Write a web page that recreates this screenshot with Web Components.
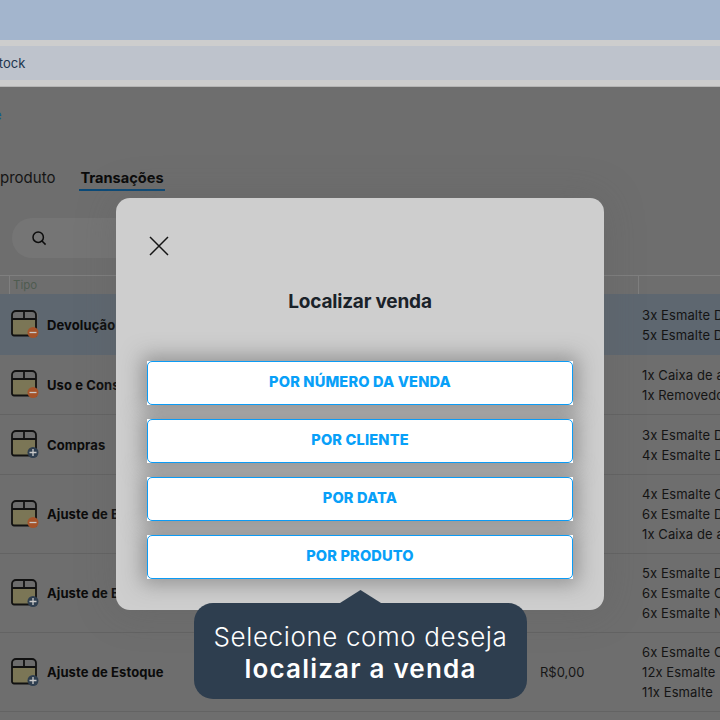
<!DOCTYPE html>
<html lang="pt-BR">
  <head>
    <meta charset="UTF-8" />
    <title>Localizar venda</title>
    <style>
      html, body { margin: 0; padding: 0; }
      body { width: 720px; height: 720px; overflow: hidden; position: relative; background: #6e6e6e; font-family: Inter, "Liberation Sans", sans-serif; }
    </style>
  </head>
  <body>
    <browser-chrome url="stock"></browser-chrome>
    <page-content>
      <tab-bar></tab-bar>
      <search-box></search-box>
      <tx-table>
        <tx-row kind="minus" label="Devolução" selected>
          <div>3x Esmalte D</div><div>5x Esmalte D</div>
        </tx-row>
        <tx-row kind="minus" label="Uso e Consumo">
          <div>1x Caixa de a</div><div>1x Removedo</div>
        </tx-row>
        <tx-row kind="plus" label="Compras">
          <div>3x Esmalte D</div><div>4x Esmalte D</div>
        </tx-row>
        <tx-row kind="minus" label="Ajuste de Estoque" tall>
          <div>4x Esmalte C</div><div>6x Esmalte D</div><div>1x Caixa de a</div>
        </tx-row>
        <tx-row kind="plus" label="Ajuste de Estoque" tall>
          <div>5x Esmalte D</div><div>6x Esmalte C</div><div>6x Esmalte N</div>
        </tx-row>
        <tx-row kind="plus" label="Ajuste de Estoque" value="R$0,00" tall>
          <div>6x Esmalte C</div><div>12x Esmalte</div><div>11x Esmalte</div>
        </tx-row>
      </tx-table>
    </page-content>
    <modal-dialog heading="Localizar venda">
      <choice-button>POR NÚMERO DA VENDA</choice-button>
      <choice-button>POR CLIENTE</choice-button>
      <choice-button>POR DATA</choice-button>
      <choice-button>POR PRODUTO</choice-button>
    </modal-dialog>
    <hint-bubble>
      Selecione como deseja<br /><b>localizar a venda</b>
    </hint-bubble>

    <template id="browser-chrome-template">
      <style>
        :host { display: block; }
        .sky { height: 40px; background: #a3b5cd; }
        .frame { height: 47px; box-sizing: border-box; padding: 6px 0 6px; background: #cdcdcd; border-bottom: 1px solid #b5b5b5; }
        .address { height: 34px; background: #bec3cc; display: flex; align-items: center; overflow: hidden; font-size: 13px; color: #20344d; }
        .address span { margin-left: -8px; white-space: nowrap; }
      </style>
      <div class="sky"></div>
      <div class="frame"><div class="address"><span id="url"></span></div></div>
    </template>

    <template id="page-content-template">
      <style>
        :host { display: block; color: #111; }
        .crumb { height: 48px; padding-top: 18px; margin-left: -6px; color: #0b5d9a; font-size: 13px; line-height: 20px; }
      </style>
      <div class="crumb">e</div>
      <slot></slot>
    </template>

    <template id="tab-bar-template">
      <style>
        :host { display: flex; gap: 24px; height: 27px; margin-top: 11px; font-size: 15px; line-height: 28px; color: #151515; }
        .active { font-weight: 700; font-size: 14.6px; border-bottom: 2px solid #0b4a78; height: 25px; padding: 0 1px 0 1px; color: #0a0a0a; }
      </style>
      <div>produto</div>
      <div class="active">Transações</div>
    </template>

    <template id="search-box-template">
      <style>
        :host { display: flex; align-items: center; width: 300px; height: 40px; margin: 27px 0 17px 12px; padding-left: 19px; background: #757575; border-radius: 20px; }
        svg { display: block; }
      </style>
      <svg width="16" height="16" viewBox="0 0 16 16" fill="none" stroke="#0c0c0c" stroke-width="1.5">
        <circle cx="7.2" cy="7.2" r="5.2" />
        <path d="M11 11l3.6 3.6" />
      </svg>
    </template>

    <template id="tx-table-template">
      <style>
        :host { display: block; }
        .head { display: flex; height: 18px; border-top: 1px solid #7f7f7f; font-size: 11.5px; line-height: 18px; color: #4f5c50; }
        .tipo { width: 630px; padding-left: 3px; margin-left: 9px; border-left: 1px solid #7f7f7f; box-sizing: border-box; }
        .end { width: 81px; border-left: 1px solid #7f7f7f; }
      </style>
      <div class="head"><div class="tipo">Tipo</div><div class="end"></div></div>
      <slot></slot>
    </template>

    <template id="tx-row-template">
      <style>
        :host { display: grid; grid-template-columns: 47px 493px 102px 78px; align-items: center; height: 60px; box-sizing: border-box; border-bottom: 1px solid #636363; }
        :host([tall]) { height: 79px; }
        :host([selected]) { background: #5e6770; height: 61px; border-bottom: none; }
        .icon { padding-left: 11px; }
        .label { font-weight: 700; font-size: 13px; letter-spacing: .1px; white-space: nowrap; color: #0b0b0b; }
        .value { font-size: 13px; color: #161616; }
        .items { font-size: 13px; letter-spacing: .1px; line-height: 20px; white-space: nowrap; color: #141414; }
      </style>
      <div class="icon"><box-icon></box-icon></div>
      <div class="label"></div>
      <div class="value"></div>
      <div class="items"><slot></slot></div>
    </template>

    <template id="box-icon-template">
      <style>
        :host { display: block; width: 29px; height: 31px; }
        svg { display: block; }
      </style>
      <svg width="29" height="31" viewBox="0 0 29 31">
        <path d="M1 6a4 4 0 0 1 4-4h18a4 4 0 0 1 4 4v4H1z" fill="#6c6c6c" />
        <rect x="1" y="9" width="25" height="17.5" fill="#7b7656" />
        <path d="M5 2h16a4 4 0 0 1 4 4v20.5H3a2 2 0 0 1-2-2V6a4 4 0 0 1 4-4zM1 10h24M13 2v8" fill="none" stroke="#111" stroke-width="1.8" />
        <circle cx="22" cy="23.5" r="5.5" id="badge" />
        <path id="sign" stroke="#c9c9c9" stroke-width="1.3" fill="none" />
      </svg>
    </template>

    <template id="modal-dialog-template">
      <style>
        :host { display: block; position: absolute; left: 116px; top: 198px; width: 488px; height: 412px; box-sizing: border-box; padding: 38px 31px 0 31px; background: #cecece; border-radius: 14px; box-shadow: 0 0 40px rgba(90, 90, 90, .3); }
        .close { display: block; margin-left: 2px; }
        h2 { margin: 34px 0 47px; height: 24px; font-size: 19px; line-height: 24px; font-weight: 700; letter-spacing: -.2px; text-align: center; color: #1a2229; }
        .list { display: flex; flex-direction: column; gap: 14px; isolation: isolate; }
      </style>
      <svg class="close" width="20" height="20" viewBox="0 0 20 20" fill="none" stroke="#151515" stroke-width="1.5">
        <path d="M1 1l18 18M19 1L1 19" />
      </svg>
      <h2 id="heading"></h2>
      <div class="list"><slot></slot></div>
    </template>

    <template id="choice-button-template">
      <style>
        :host { display: block; position: relative; height: 44px; }
        /* shadow sits under all the buttons so the next one doesn't darken this one */
        :host::before { content: ""; position: absolute; inset: 0; z-index: -1; box-shadow: 0 0 20px 5px rgba(90, 90, 90, .5); }
        button { display: block; box-sizing: border-box; width: 100%; height: 100%; background: #fff; outline: none; border: 1.5px solid #0b9bf5; border-radius: 5px; font: 800 14.6px Inter, "Liberation Sans", sans-serif; letter-spacing: .15px; color: #08a0f8; padding: 0 0 2px; }
        .sheet { height: 100%; background: #fff; }
      </style>
      <div class="sheet"><button><slot></slot></button></div>
    </template>

    <template id="hint-bubble-template">
      <style>
        :host { display: block; position: absolute; left: 194px; top: 603px; width: 333px; height: 96px; box-sizing: border-box; padding: 18px 0 0; background: #2e3e4f; border-radius: 19px; color: #fff; font-size: 26px; line-height: 32px; font-weight: 300; letter-spacing: .6px; text-align: center; }
        :host::before { content: ""; position: absolute; left: 146px; top: -13px; width: 41px; height: 13px; background: #2e3e4f; clip-path: polygon(50% 0, 100% 100%, 0 100%); }
        ::slotted(b) { font-weight: 600; letter-spacing: 1.2px; }
      </style>
      <slot></slot>
    </template>

    <script type="text/javascript">
      // every element clones its own template into an open shadow root
      class BaseElement extends HTMLElement {
        constructor() {
          super()
          this.attachShadow({ mode: 'open' })
          const tpl = document.getElementById(this.localName + '-template')
          this.shadowRoot.appendChild(tpl.content.cloneNode(true))
        }
      }

      class BrowserChrome extends BaseElement {
        connectedCallback() {
          this.shadowRoot.getElementById('url').textContent = this.getAttribute('url')
        }
      }

      class TxRow extends BaseElement {
        connectedCallback() {
          const root = this.shadowRoot
          root.querySelector('.label').textContent = this.getAttribute('label')
          root.querySelector('.value').textContent = this.getAttribute('value') || ''
          root.querySelector('box-icon').setAttribute('kind', this.getAttribute('kind'))
        }
      }

      class BoxIcon extends BaseElement {
        static get observedAttributes() { return ['kind'] }
        attributeChangedCallback() {
          const plus = this.getAttribute('kind') === 'plus'
          this.shadowRoot.getElementById('badge').setAttribute('fill', plus ? '#2e3e4f' : '#a4532a')
          this.shadowRoot.getElementById('sign').setAttribute('d', plus ? 'M18.5 23.5h7M22 20v7' : 'M18.5 23.5h7')
        }
      }

      class ModalDialog extends BaseElement {
        connectedCallback() {
          this.shadowRoot.getElementById('heading').textContent = this.getAttribute('heading')
        }
      }

      customElements.define('browser-chrome', BrowserChrome)
      customElements.define('page-content', class extends BaseElement {})
      customElements.define('tab-bar', class extends BaseElement {})
      customElements.define('search-box', class extends BaseElement {})
      customElements.define('tx-table', class extends BaseElement {})
      customElements.define('box-icon', BoxIcon)
      customElements.define('tx-row', TxRow)
      customElements.define('modal-dialog', ModalDialog)
      customElements.define('choice-button', class extends BaseElement {})
      customElements.define('hint-bubble', class extends BaseElement {})
    </script>
  </body>
</html>
